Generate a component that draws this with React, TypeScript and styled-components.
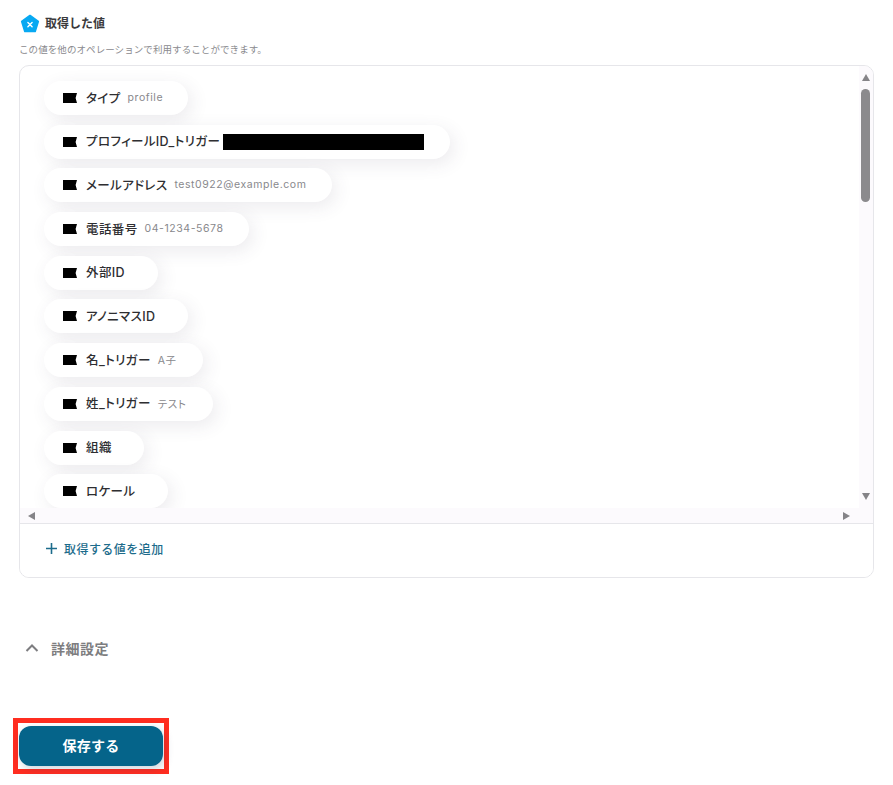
import styled, { createGlobalStyle } from 'styled-components'

const fontStack = `Inter, "Noto Sans CJK JP", "Noto Sans", sans-serif`

const GlobalStyle = createGlobalStyle`
  html, body {
    margin: 0;
    padding: 0;
    height: 100%;
    background: #fff;
    overflow: hidden;
  }
`

const Page = styled.div`
  width: 893px;
  height: 785px;
  box-sizing: border-box;
  padding: 14px 19px 0 19px;
  font-family: ${fontStack};
  color: #333;
`

const HeadRow = styled.div`
  display: flex;
  align-items: center;
  gap: 5px;
  height: 19px;
  padding-left: 1px;
`

const Title = styled.h2`
  margin: 0;
  font-size: 12px;
  line-height: 19px;
  font-weight: 700;
  color: #3a3a3c;
`

const Hint = styled.p`
  margin: 10px 0 0;
  font-size: 9.5px;
  line-height: 14px;
  letter-spacing: 0.08px;
  color: #8a8a8e;
`

const Panel = styled.section`
  margin-top: 8px;
  height: 513px;
  box-sizing: border-box;
  border: 1px solid #e6e6ea;
  border-radius: 10px;
  display: flex;
  flex-direction: column;
  overflow: hidden;
`

const ScrollArea = styled.div`
  display: grid;
  grid-template-columns: 1fr 14px;
  grid-template-rows: 442px 15px;
  border-bottom: 1px solid #e6e6ea;
`

const Viewport = styled.div`
  overflow: hidden;
  padding: 15px 0 0 24px;
  display: flex;
  flex-direction: column;
  align-items: flex-start;
  gap: 9.7px;
`

const Pill = styled.div<{ $w: number }>`
  flex: none;
  width: ${p => p.$w}px;
  height: 34px;
  box-sizing: border-box;
  padding-left: 19px;
  display: flex;
  align-items: center;
  border-radius: 17px;
  background: #fff;
  box-shadow: 4px 5px 18px rgba(70, 60, 90, 0.1);
`

const Label = styled.span`
  margin: 0 0 2px 9px;
  font-size: 12.5px;
  font-weight: 500;
  letter-spacing: 0.38px;
  font-feature-settings: 'palt';
  white-space: nowrap;
  color: #2e2e31;
`

const Value = styled.span`
  margin: 0 0 1px 7px;
  font-size: 10.5px;
  letter-spacing: 0.56px;
  font-feature-settings: 'palt';
  white-space: nowrap;
  color: #88888c;
`

const Redacted = styled.span`
  margin-left: 3px;
  width: 201px;
  height: 16px;
  background: #000;
`

const VRail = styled.div`
  background: #fcfafd;
  display: flex;
  flex-direction: column;
  align-items: center;
  padding: 8px 0 8px;
`

const Thumb = styled.div`
  width: 9px;
  height: 113px;
  margin-top: 8px;
  margin-right: 1px;
  border-radius: 5px;
  background: #8b8a8d;
`

const HRail = styled.div`
  grid-column: 1 / 3;
  background: #fcfafd;
  display: flex;
  align-items: center;
  justify-content: space-between;
  padding: 0 23px 0 8px;
`

const Arrow = styled.i<{ $dir: 'up' | 'down' | 'left' | 'right' }>`
  display: block;
  flex: none;
  width: 0;
  height: 0;
  border-style: solid;
  border-color: transparent;
  ${p => (p.$dir === 'up' || p.$dir === 'down')
    ? `border-width: ${p.$dir === 'up' ? '0 4.5px 7px' : '7px 4.5px 0'};
       border-${p.$dir === 'up' ? 'bottom' : 'top'}-color: #858488;
       margin-right: 1px;
       ${p.$dir === 'down' ? 'margin-top: auto;' : ''}`
    : `border-width: ${p.$dir === 'left' ? '4.5px 7px 4.5px 0' : '4.5px 0 4.5px 7px'};
       border-${p.$dir === 'left' ? 'right' : 'left'}-color: #858488;`}
`

const AddRow = styled.button`
  flex: 1;
  display: flex;
  align-items: center;
  gap: 6px;
  padding: 0 0 4px 25px;
  border: 0;
  background: #fff;
  font-family: inherit;
  font-size: 12px;
  font-weight: 500;
  letter-spacing: 0.45px;
  color: #1d6c8c;
`

const Advanced = styled.div`
  margin-top: 59px;
  height: 22px;
  display: flex;
  align-items: center;
  gap: 12px;
  padding-left: 6px;
  font-size: 14px;
  font-weight: 700;
  letter-spacing: 0.5px;
  color: #7d7d80;
`

const Highlight = styled.div`
  margin: 59px 0 0 -6px;
  width: 156px;
  height: 56px;
  box-sizing: border-box;
  border: 5px solid #ff2d20;
  padding: 3px 0 0 1px;
`

const SaveButton = styled.button`
  display: block;
  width: 144px;
  height: 40px;
  padding: 0 0 3px;
  border: 0;
  border-radius: 12px;
  background: #05648a;
  box-shadow: 2px 3px 8px rgba(30, 60, 100, 0.22);
  font-family: inherit;
  font-size: 14px;
  font-weight: 700;
  letter-spacing: 0.3px;
  color: #fff;
`

const FlagIcon = () => (
  <svg width="14" height="10" viewBox="0 0 14 10" style={{ flex: 'none' }}>
    <path d="M0 0H14L12.6 5L14 10H0Z" fill="#000" />
  </svg>
)

const LogoIcon = () => (
  <svg width="20" height="20" viewBox="0 0 20 20" style={{ flex: 'none' }}>
    <path
      d="M10 1.6L18.2 7.6L15.1 17.4H4.9L1.8 7.6Z"
      fill="#08a9f2"
      stroke="#08a9f2"
      strokeWidth="1.8"
      strokeLinejoin="round"
    />
    <path d="M7.9 8.4L12.1 12.8M12.1 8.4L7.9 12.8" stroke="#fff" strokeWidth="1.4" strokeLinecap="round" />
  </svg>
)

const PlusIcon = () => (
  <svg width="13" height="13" viewBox="0 0 13 13" style={{ flex: 'none' }}>
    <path d="M6.5 1V12M1 6.5H12" stroke="#1d6c8c" strokeWidth="1.6" />
  </svg>
)

const ChevronUp = () => (
  <svg width="14" height="10" viewBox="0 0 14 10" style={{ flex: 'none' }}>
    <path d="M1.5 8L7 2.5L12.5 8" fill="none" stroke="#7d7d80" strokeWidth="2" />
  </svg>
)

const rows: { label: string; value?: string; hidden?: boolean; w: number }[] = [
  { label: 'タイプ', value: 'profile', w: 144 },
  { label: 'プロフィールID_トリガー', hidden: true, w: 406 },
  { label: 'メールアドレス', value: 'test0922@example.com', w: 288 },
  { label: '電話番号', value: '04-1234-5678', w: 205 },
  { label: '外部ID', w: 114 },
  { label: 'アノニマスID', w: 144 },
  { label: '名_トリガー', value: 'A子', w: 159 },
  { label: '姓_トリガー', value: 'テスト', w: 169 },
  { label: '組織', w: 100 },
  { label: 'ロケール', w: 124 },
]

export default function App() {
  return (
    <Page>
      <GlobalStyle />
      <HeadRow>
        <LogoIcon />
        <Title>取得した値</Title>
      </HeadRow>
      <Hint>この値を他のオペレーションで利用することができます。</Hint>
      <Panel>
        <ScrollArea>
          <Viewport>
            {rows.map(r => (
              <Pill key={r.label} $w={r.w}>
                <FlagIcon />
                <Label>{r.label}</Label>
                {r.value && <Value>{r.value}</Value>}
                {r.hidden && <Redacted />}
              </Pill>
            ))}
          </Viewport>
          <VRail>
            <Arrow $dir="up" />
            <Thumb />
            <Arrow $dir="down" />
          </VRail>
          <HRail>
            <Arrow $dir="left" />
            <Arrow $dir="right" />
          </HRail>
        </ScrollArea>
        <AddRow>
          <PlusIcon />
          取得する値を追加
        </AddRow>
      </Panel>
      <Advanced>
        <ChevronUp />
        詳細設定
      </Advanced>
      <Highlight>
        <SaveButton>保存する</SaveButton>
      </Highlight>
    </Page>
  )
}
